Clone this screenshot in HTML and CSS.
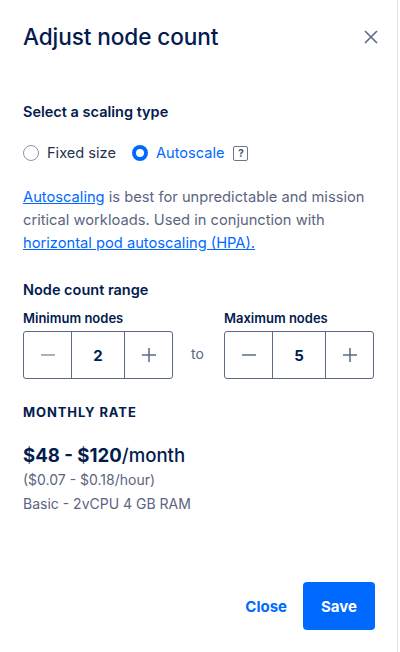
FILE: index.html
```html
<!DOCTYPE html>
<html>
<head>
<meta charset="utf-8">
<link rel="stylesheet" href="styles.css">
</head>
<body>
<div class="panel">
  <div class="header">
    <h1 class="title">Adjust node count</h1>
    <button class="close-x" aria-label="Close">
      <svg width="14" height="14" viewBox="0 0 14 14"><path d="M1 1L13 13M13 1L1 13" stroke="#5b6987" stroke-width="1.6" fill="none"/></svg>
    </button>
  </div>

  <div class="section-label sl-scaling">Select a scaling type</div>
  <div class="radios">
    <label class="radio"><span class="dot"></span><span class="r-text">Fixed size</span></label>
    <label class="radio checked"><span class="dot"></span><span class="r-text">Autoscale</span></label>
    <span class="help">?</span>
  </div>

  <p class="desc"><a href="#">Autoscaling</a> is best for unpredictable and mission critical workloads. Used in conjunction with <a href="#">horizontal pod autoscaling (HPA).</a></p>

  <div class="section-label sl-range">Node count range</div>
  <div class="range">
    <div class="field">
      <div class="field-label">Minimum nodes</div>
      <div class="stepper">
        <span class="step minus"><svg width="16" height="16" viewBox="0 0 16 16"><path d="M1 8H15" stroke="#8c95aa" stroke-width="1.5"/></svg></span>
        <span class="val">2</span>
        <span class="step plus"><svg width="16" height="16" viewBox="0 0 16 16"><path d="M1 8H15M8 1V15" stroke="#5b6987" stroke-width="1.5"/></svg></span>
      </div>
    </div>
    <div class="to">to</div>
    <div class="field">
      <div class="field-label">Maximum nodes</div>
      <div class="stepper">
        <span class="step minus"><svg width="16" height="16" viewBox="0 0 16 16"><path d="M1 8H15" stroke="#5b6987" stroke-width="1.5"/></svg></span>
        <span class="val">5</span>
        <span class="step plus"><svg width="16" height="16" viewBox="0 0 16 16"><path d="M1 8H15M8 1V15" stroke="#5b6987" stroke-width="1.5"/></svg></span>
      </div>
    </div>
  </div>

  <div class="rate-label">MONTHLY RATE</div>
  <div class="price"><b>$48 - $120</b>/month</div>
  <div class="sub">($0.07 - $0.18/hour)</div>
  <div class="sub">Basic - 2vCPU 4 GB RAM</div>

  <div class="footer">
    <button class="btn-link">Close</button>
    <button class="btn-save">Save</button>
  </div>
</div>
</body>
</html>
```

FILE: styles.css
```css
* { box-sizing: border-box; }
html, body { margin: 0; padding: 0; background: #fff; }
body { font-family: Inter, "Liberation Sans", sans-serif; color: #031b4e; }

.panel {
  width: 398px;
  height: 652px;
  border-right: 1px solid #dfe2e8;
  padding: 0 23px;
  display: flex;
  flex-direction: column;
}

.header {
  display: flex;
  align-items: center;
  justify-content: space-between;
  padding-top: 24px;
  height: 50px;
}
.title {
  margin: 0;
  font-size: 22.6px;
  font-weight: 500;
  line-height: 26px;
  letter-spacing: -0.1px;
}
.close-x {
  border: 0;
  background: none;
  padding: 0;
  margin-right: -4px;
  width: 14px;
  height: 14px;
  display: flex;
}

.section-label {
  font-size: 14.5px;
  font-weight: 600;
  line-height: 20px;
}
.sl-scaling { margin-top: 52px; }

.radios {
  display: flex;
  align-items: center;
  margin-top: 20px;
  height: 22px;
}
.radio {
  display: flex;
  align-items: center;
  font-size: 14.6px;
  color: #24324f;
  margin-right: 16px;
}
.radio .dot {
  width: 16px;
  height: 16px;
  border-radius: 50%;
  border: 1.5px solid #8a93a8;
  margin-right: 8px;
}
.radio.checked { color: #0069ff; margin-right: 9px; }
.radio.checked .dot { border: 4px solid #0069ff; }
.help {
  width: 15px;
  height: 15px;
  border: 1.2px solid #6b7590;
  border-radius: 2px;
  font-size: 10px;
  font-weight: 700;
  color: #4b5570;
  display: flex;
  align-items: center;
  justify-content: center;
}

.desc {
  margin: 22px 0 0;
  font-size: 14.7px;
  line-height: 23px;
  color: #5b6581;
}
.desc a { color: #0069ff; text-decoration: underline; }

.sl-range { margin-top: 25px; }

.range {
  display: flex;
  align-items: flex-end;
  margin-top: 10px;
}
.field-label {
  font-size: 13px;
  font-weight: 600;
  line-height: 16px;
  margin-bottom: 5px;
}
.stepper {
  display: flex;
  width: 150px;
  height: 48px;
  border: 1px solid #5b6987;
  border-radius: 3px;
}
.step {
  display: flex;
  align-items: center;
  justify-content: center;
}
.step.minus { width: 48px; border-right: 1px solid #5b6987; }
.step.plus { flex: 1; border-left: 1px solid #5b6987; }
.val {
  width: 52px;
  display: flex;
  align-items: center;
  justify-content: center;
  font-size: 15px;
  font-weight: 700;
}
.to {
  width: 52px;
  text-align: center;
  font-size: 14px;
  color: #5b6581;
  align-self: flex-end;
  margin-bottom: 17px;
  padding-right: 2px;
}

.rate-label {
  margin-top: 25px;
  font-size: 13px;
  font-weight: 700;
  letter-spacing: 0.9px;
  line-height: 16px;
}
.price {
  margin-top: 22px;
  font-size: 18.6px;
  line-height: 26px;
  font-weight: 500;
}
.price b { font-weight: 700; }
.sub {
  font-size: 14px;
  line-height: 24px;
  color: #5b6581;
}

.footer {
  margin-top: auto;
  margin-bottom: 22px;
  display: flex;
  justify-content: flex-end;
  align-items: center;
}
.btn-link {
  border: 0;
  background: none;
  font-family: inherit;
  font-size: 15px;
  font-weight: 700;
  color: #0069ff;
  padding: 0;
  margin-right: 16px;
}
.btn-save {
  border: 0;
  background: #0069ff;
  color: #fff;
  font-family: inherit;
  font-size: 15px;
  font-weight: 700;
  width: 72px;
  height: 48px;
  border-radius: 4px;
  margin-right: -1px;
}
```
